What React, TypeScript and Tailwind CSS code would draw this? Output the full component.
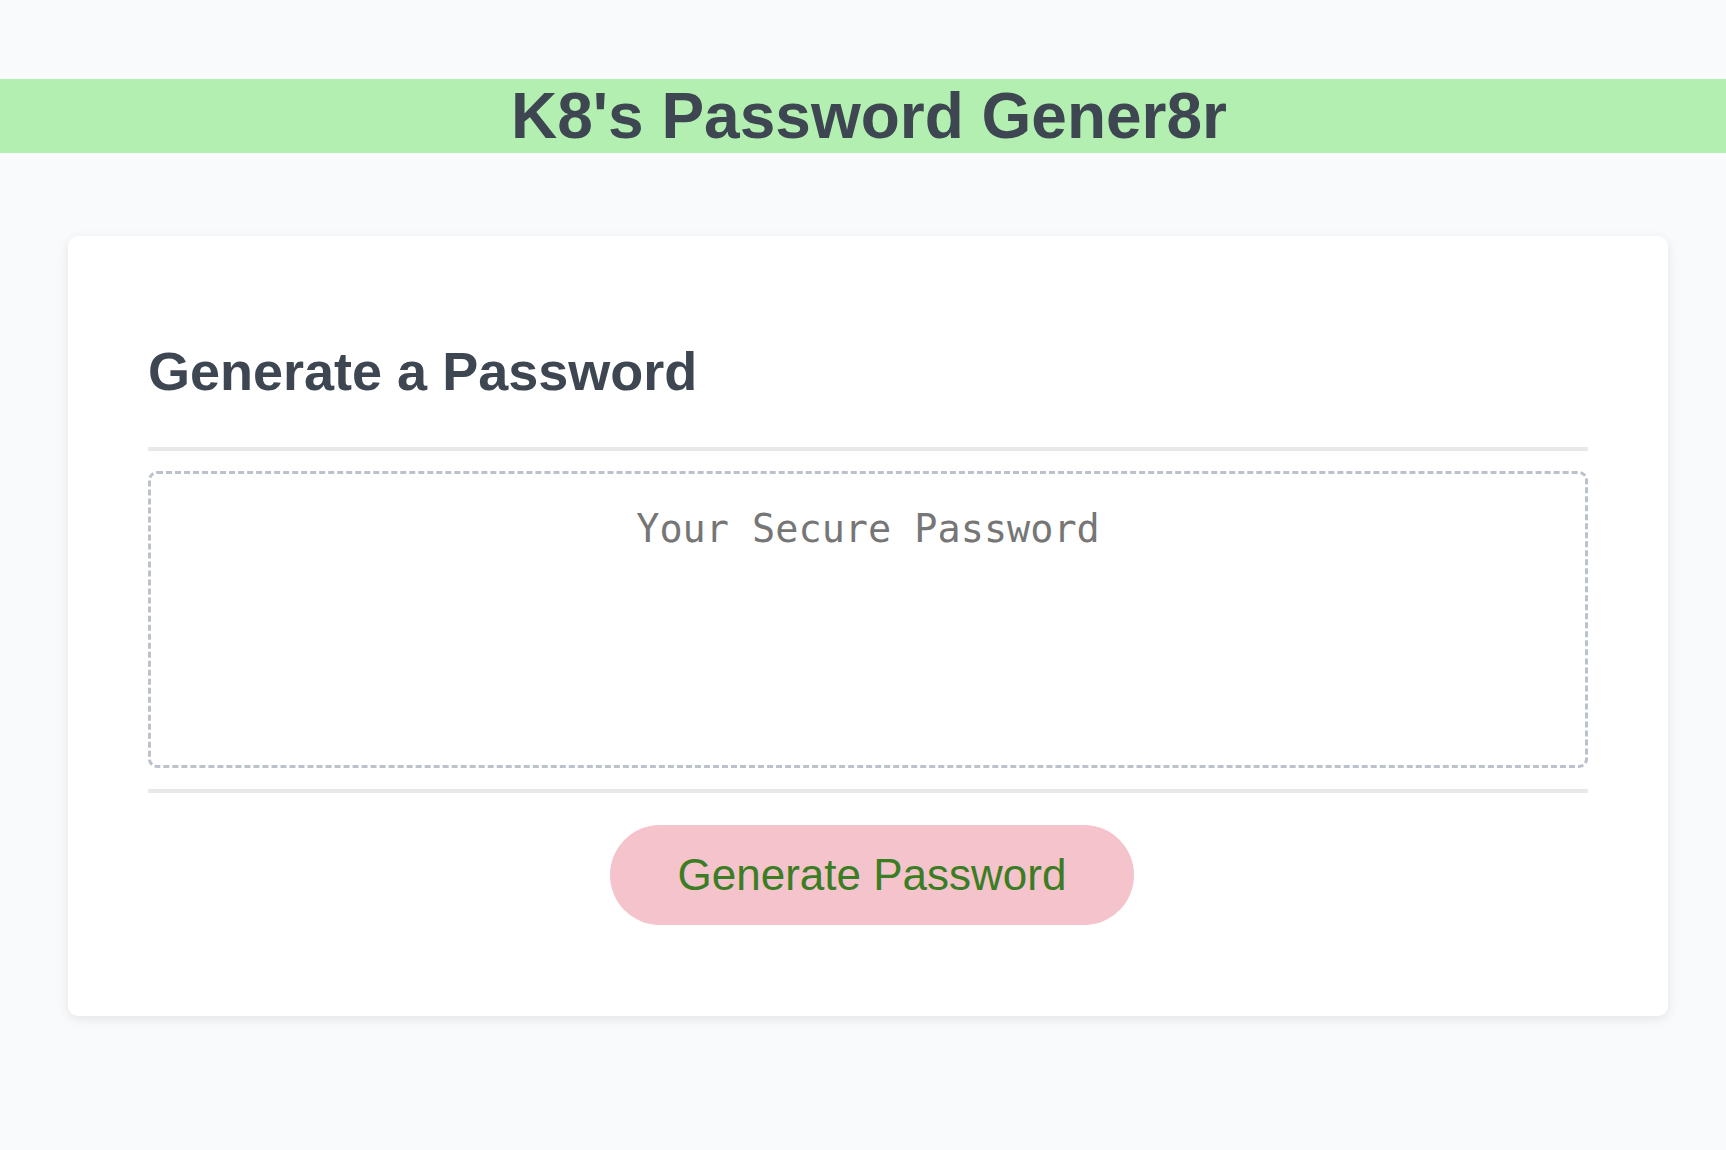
export default function App() {
  return (
    <div className="min-h-[1150px] bg-[#f9fafc] pt-[79px] font-['Liberation_Sans',Arial,sans-serif]">
      <header className="flex h-[74px] items-center justify-center bg-[#b3efb0] pl-[12px]">
        <h1 className="text-[64px] font-bold leading-[74px] text-[#3d4651]">K8's Password Gener8r</h1>
      </header>

      <div className="pl-[68px] pt-[83px]">
        <div className="w-[1600px] rounded-[10px] bg-white px-[80px] pb-[91px] pt-[104px] shadow-[0_3px_12px_rgba(0,0,0,0.09)]">
          <h2 className="text-[54px] font-bold leading-[62px] text-[#3d4651]">Generate a Password</h2>

          <div className="mt-[45px] h-[4px] bg-[#e8e8e8]" />

          <div className="mt-[20px] h-[297px] rounded-[9px] border-[3px] border-dashed border-[#bcc2cc]">
            <textarea
              readOnly
              placeholder="Your Secure Password"
              className="block h-full w-full resize-none bg-transparent px-4 pt-[26px] text-center font-['DejaVu_Sans_Mono',Menlo,monospace] text-[38.5px] text-[#767676] outline-none placeholder:text-[#767676]"
            />
          </div>

          <div className="mt-[21px] h-[4px] bg-[#e8e8e8]" />

          <div className="mt-[32px] flex justify-center pl-[8px]">
            <button className="h-[100px] w-[524px] rounded-full bg-[#f4c3cb] text-[44px] text-[#3a7d23]">
              Generate Password
            </button>
          </div>
        </div>
      </div>
    </div>
  );
}
